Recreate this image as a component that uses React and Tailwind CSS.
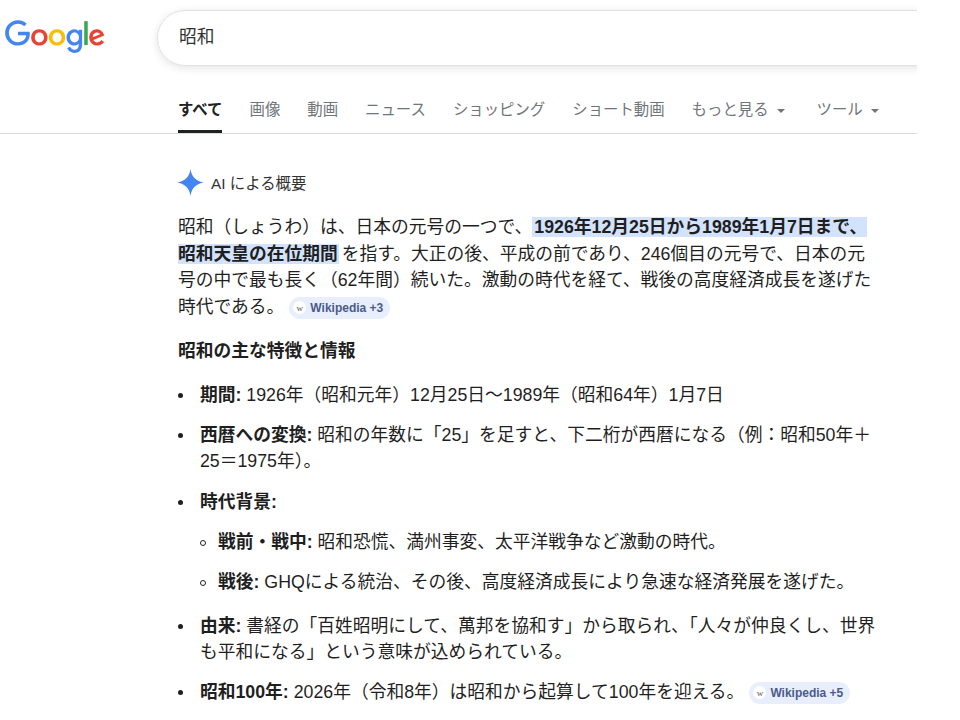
const font = { fontFamily: '"Liberation Sans", "Noto Sans CJK JP", sans-serif' };

const GoogleLogo = () => (
  <svg viewBox="0 0 272 92" className="h-[34px] w-[100px]">
    <path fill="#EA4335" d="M115.75 47.18c0 12.77-9.99 22.18-22.25 22.18s-22.25-9.41-22.25-22.18C71.25 34.32 81.24 25 93.5 25s22.25 9.32 22.25 22.18zm-9.74 0c0-7.98-5.79-13.44-12.51-13.44S80.99 39.2 80.99 47.18c0 7.9 5.79 13.44 12.51 13.44s12.51-5.55 12.51-13.44z" />
    <path fill="#FBBC05" d="M163.75 47.18c0 12.77-9.99 22.18-22.25 22.18s-22.25-9.41-22.25-22.18c0-12.85 9.99-22.18 22.25-22.18s22.25 9.32 22.25 22.18zm-9.74 0c0-7.98-5.79-13.44-12.51-13.44s-12.51 5.46-12.51 13.44c0 7.9 5.79 13.44 12.51 13.44s12.51-5.55 12.51-13.44z" />
    <path fill="#4285F4" d="M209.75 26.34v39.82c0 16.38-9.66 23.07-21.08 23.07-10.75 0-17.22-7.19-19.66-13.07l8.48-3.53c1.51 3.61 5.21 7.87 11.17 7.87 7.31 0 11.84-4.51 11.84-13v-3.19h-.34c-2.18 2.69-6.38 5.04-11.68 5.04-11.09 0-21.25-9.66-21.25-22.09 0-12.52 10.16-22.26 21.25-22.26 5.29 0 9.49 2.35 11.68 4.96h.34v-3.61h9.25zm-8.56 20.92c0-7.81-5.21-13.52-11.84-13.52-6.72 0-12.35 5.71-12.35 13.52 0 7.73 5.63 13.36 12.35 13.36 6.63 0 11.84-5.63 11.84-13.36z" />
    <path fill="#34A853" d="M225 3v65h-9.5V3h9.5z" />
    <path fill="#EA4335" d="M262.02 54.48l7.56 5.04c-2.44 3.61-8.32 9.83-18.48 9.83-12.6 0-22.01-9.74-22.01-22.18 0-13.19 9.49-22.18 20.92-22.18 11.51 0 17.14 9.16 18.98 14.11l1.01 2.52-29.65 12.28c2.27 4.45 5.8 6.72 10.75 6.72 4.96 0 8.4-2.44 10.92-6.14zm-23.27-7.98l19.82-8.23c-1.09-2.77-4.37-4.7-8.23-4.7-4.95 0-11.84 4.37-11.59 12.93z" />
    <path fill="#4285F4" d="M35.29 41.41V32H67c.31 1.64.47 3.58.47 5.68 0 7.06-1.93 15.79-8.15 22.01-6.05 6.3-13.78 9.66-24.02 9.66C16.32 69.35.36 53.89.36 34.91.36 15.93 16.32.47 35.3.47c10.5 0 17.98 4.12 23.6 9.49l-6.64 6.64c-4.03-3.78-9.49-6.72-16.97-6.72-13.86 0-24.7 11.17-24.7 25.03 0 13.86 10.84 25.03 24.7 25.03 8.99 0 14.11-3.61 17.39-6.89 2.66-2.66 4.41-6.46 5.1-11.65l-22.49.01z" />
  </svg>
);

const Spark = () => (
  <svg viewBox="0 0 28 28" className="h-[27px] w-[27px]">
    <path fill="#4285f4" d="M14 0C15 8 20 13 28 14 20 15 15 20 14 28 13 20 8 15 0 14 8 13 13 8 14 0Z" />
  </svg>
);

const Chip = ({ label, className }) => (
  <span className={`inline-flex h-[22px] items-center rounded-full bg-[#e8eefc] pl-[4px] pr-[7px] align-[2px] text-[12px] leading-[22px] font-bold text-[#4b5b8c] ${className}`}>
    <span className="mr-[4px] flex h-[13px] w-[13px] items-center justify-center rounded-full bg-white text-[9px] font-normal text-[#555]" style={{ fontFamily: '"Liberation Serif", serif' }}>w</span>
    {label}
  </span>
);

const Caret = () => (
  <span className="ml-[8px] inline-block h-0 w-0 border-x-[4px] border-t-[4px] border-x-transparent border-t-[#70757a] align-[2px]" />
);

// bullet column + text; the browser's own marker sits too close to the text here
const Item = ({ sub, className = "", children }) => (
  <li className={`flex ${className}`}>
    {sub ? (
      <span className="mt-[11px] mr-[12px] h-[6px] w-[6px] shrink-0 rounded-full border border-[#1f1f1f]" />
    ) : (
      <span className="mt-[11px] mr-[17px] h-[5px] w-[5px] shrink-0 rounded-full bg-[#1f1f1f]" />
    )}
    <div className="min-w-0 flex-1">{children}</div>
  </li>
);

const tabs = ["画像", "動画", "ニュース", "ショッピング", "ショート動画"];

export default function App() {
  return (
    <div className="min-h-[720px] w-[960px] overflow-hidden bg-white text-[17.76px] text-[#1f1f1f]" style={font}>
      <div className="w-[917px] overflow-hidden">
        <header className="relative h-[134px] border-b border-[#dadce0]">
          <div className="flex pt-[10px]">
            <div className="w-[157px] shrink-0 pl-[5px] pt-[10px]">
              <GoogleLogo />
            </div>
            <div className="flex h-[56px] w-[900px] shrink-0 items-center rounded-[28px] border border-[#dfe1e5] pb-[2px] pl-[21px] text-[#333] shadow-[0_2px_8px_rgba(32,33,36,0.12)]">
              昭和
            </div>
          </div>
          <nav className="mt-[34px] flex pl-[178px] text-[15.4px] leading-[20px] text-[#70757a]">
            <div className="relative mr-[27px] font-bold text-[#202124]">
              すべて
              <div className="absolute left-0 right-0 top-[30px] h-[3px] bg-[#202124]" />
            </div>
            {tabs.map((t) => (
              <div key={t} className="mr-[27px]">{t}</div>
            ))}
            <div className="mr-[32px]">もっと見る<Caret /></div>
            <div>ツール<Caret /></div>
          </nav>
        </header>
      </div>

      <main className="ml-[178px] w-[698px] leading-[26.4px]">
        <div className="mt-[37px] flex items-center text-[15.4px] text-[#333]">
          <span className="-mt-[3px] -ml-[1px] mr-[7px]"><Spark /></span>
          AI による概要
        </div>
        <p className="mt-[17px]">
          昭和（しょうわ）は、日本の元号の一つで、
          <strong className="bg-[#d3e3fd] pl-[2px] pr-[1px] font-bold">1926年12月25日から1989年1月7日まで、昭和天皇の在位期間</strong>
          <span className="ml-[3px]">を指す。大正の後、平成の前であり、246個目の元号で、日本の元号の中で最も長く（62年間）続いた。激動の時代を経て、戦後の高度経済成長を遂げた時代である。</span>
          <Chip label="Wikipedia +3" className="ml-[5px]" />
        </p>
        <h2 className="mt-[18px] font-bold">昭和の主な特徴と情報</h2>
        <ul className="mt-[18px]">
          <Item><strong>期間:</strong> 1926年（昭和元年）12月25日～1989年（昭和64年）1月7日</Item>
          <Item className="mt-[13px]"><strong>西暦への変換:</strong> 昭和の年数に「25」を足すと、下二桁が西暦になる（例：昭和50年＋25＝1975年）。</Item>
          <Item className="mt-[14px]">
            <strong>時代背景:</strong>
            <ul>
              <Item sub className="mt-[14px]"><strong>戦前・戦中:</strong> 昭和恐慌、満州事変、太平洋戦争など激動の時代。</Item>
              <Item sub className="mt-[14px]"><strong>戦後:</strong> GHQによる統治、その後、高度経済成長により急速な経済発展を遂げた。</Item>
            </ul>
          </Item>
          <Item className="mt-[17px]"><strong>由来:</strong> 書経の「百姓昭明にして、萬邦を協和す」から取られ、「人々が仲良くし、世界も平和になる」という意味が込められている。</Item>
          <Item className="mt-[13px]"><strong>昭和100年:</strong> 2026年（令和8年）は昭和から起算して100年を迎える。<Chip label="Wikipedia +5" className="ml-[5px]" /></Item>
        </ul>
      </main>
    </div>
  );
}
